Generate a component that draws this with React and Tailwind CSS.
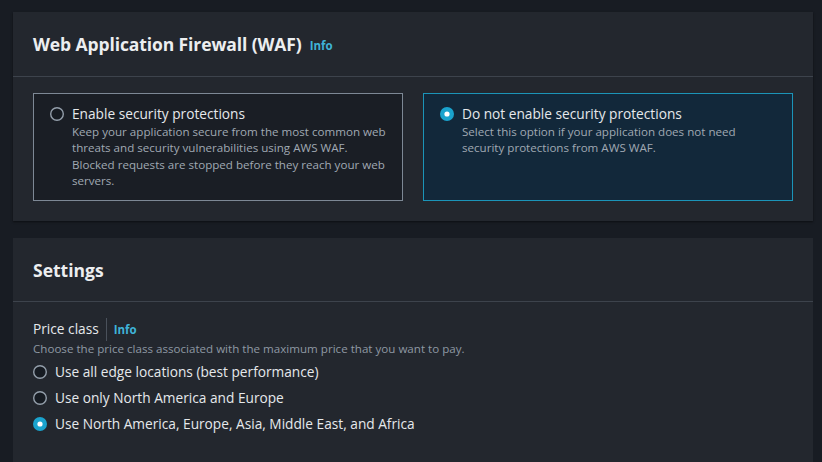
import { useState } from 'react';

const FONT = { fontFamily: '"Open Sans", "Noto Sans", Arial, sans-serif' };

function Radio({ checked }) {
  return checked ? (
    <svg width="14" height="14" viewBox="0 0 14 14" className="shrink-0">
      <circle cx="7" cy="7" r="7" fill="#1aa3cd" />
      <circle cx="7" cy="7" r="2.6" fill="#ffffff" />
    </svg>
  ) : (
    <svg width="14" height="14" viewBox="0 0 14 14" className="shrink-0">
      <circle cx="7" cy="7" r="6.3" fill="#161b22" stroke="#949fab" strokeWidth="1.4" />
    </svg>
  );
}

function Tile({ checked, title, text, onClick }) {
  return (
    <button
      onClick={onClick}
      className={`flex items-start gap-2 text-left pl-4 pr-3 pt-[10px] pb-[11px] border ${
        checked ? 'bg-[#12283a] border-[#1b94b8]' : 'bg-[#1a1e25] border-[#7d8895]'
      }`}
    >
      <span className="pt-[3px]">
        <Radio checked={checked} />
      </span>
      <span className="flex flex-col">
        <span className="text-[13.7px] leading-[20px] text-[#e6e9ec]">{title}</span>
        <span className="text-[11.6px] leading-[16.3px] text-[#a0a9b3]">{text}</span>
      </span>
    </button>
  );
}

export default function App() {
  const [waf, setWaf] = useState('off');
  const [price, setPrice] = useState('most');

  const prices = [
    { id: 'all', label: 'Use all edge locations (best performance)' },
    { id: 'na', label: 'Use only North America and Europe' },
    { id: 'most', label: 'Use North America, Europe, Asia, Middle East, and Africa' },
  ];

  return (
    <div style={FONT} className="h-screen bg-[#181c23] px-[13px] pt-3 pr-[9px] overflow-hidden">
      {/* WAF */}
      <div className="bg-[#23272e] shadow-[0_1px_2px_rgba(0,0,0,0.5)]">
        <div className="h-[65px] px-5 flex items-center border-b border-[#3d434c]">
          <h2 className="text-[17.5px] font-bold text-[#eceef0] tracking-[-0.1px]">Web Application Firewall (WAF)</h2>
          <span className="ml-2 mt-[3px] text-[11.5px] font-bold text-[#3fb3d8]">Info</span>
        </div>
        <div className="px-5 pt-[16px] pb-5 grid grid-cols-2 gap-5">
          <Tile
            checked={waf === 'on'}
            onClick={() => setWaf('on')}
            title="Enable security protections"
            text="Keep your application secure from the most common web threats and security vulnerabilities using AWS WAF. Blocked requests are stopped before they reach your web servers."
          />
          <Tile
            checked={waf === 'off'}
            onClick={() => setWaf('off')}
            title="Do not enable security protections"
            text="Select this option if your application does not need security protections from AWS WAF."
          />
        </div>
      </div>

      {/* Settings */}
      <div className="mt-[17px] bg-[#23272e] h-[260px]">
        <div className="h-[64px] px-5 flex items-center border-b border-[#3d434c]">
          <h2 className="text-[17.5px] font-bold text-[#eceef0]">Settings</h2>
        </div>
        <div className="px-5 pt-[15px]">
          <div className="flex items-center h-[24px]">
            <span className="text-[13.7px] text-[#e6e9ec]">Price class</span>
            <span className="mx-[7px] w-px h-[23px] bg-[#4a515b]" />
            <span className="text-[11.5px] font-bold text-[#3fb3d8] mt-px">Info</span>
          </div>
          <p className="text-[11.6px] leading-[16px] text-[#8e98a3]">
            Choose the price class associated with the maximum price that you want to pay.
          </p>
          <div className="flex flex-col pt-[2px]">
            {prices.map((p) => (
              <button
                key={p.id}
                onClick={() => setPrice(p.id)}
                className="flex items-center gap-2 h-[26px] text-left"
              >
                <Radio checked={price === p.id} />
                <span className="text-[13.7px] text-[#e6e9ec]">{p.label}</span>
              </button>
            ))}
          </div>
        </div>
      </div>
    </div>
  );
}
